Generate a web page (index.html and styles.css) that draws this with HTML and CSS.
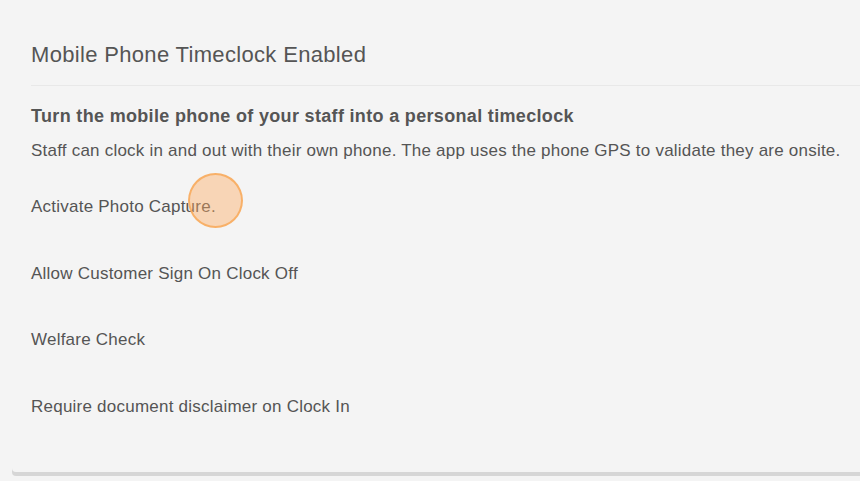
FILE: index.html
```html
<!DOCTYPE html>
<html lang="en">
<head>
    <meta charset="UTF-8">
    <title>Mobile Phone Timeclock</title>
    <link rel="stylesheet" href="styles.css">
</head>
<body>
<div class="card">
    <div class="card-head">
        <h2>Mobile Phone Timeclock Enabled</h2>
    </div>
    <div class="card-body">
        <h4>Turn the mobile phone of your staff into a personal timeclock</h4>
        <p class="desc">Staff can clock in and out with their own phone. The app uses the phone GPS to validate they are onsite.</p>
        <ul class="options">
            <li class="clicked">Activate Photo Capture.<span class="click-dot"></span></li>
            <li>Allow Customer Sign On Clock Off</li>
            <li>Welfare Check</li>
            <li>Require document disclaimer on Clock In</li>
        </ul>
    </div>
</div>
</body>
</html>
```

FILE: styles.css
```css
*{
    margin:0;
    padding:0;
    list-style:none;
    box-sizing:border-box;
}
html,body{
    background:#f4f4f4;
    height:100%;
    overflow:hidden;
}
body{
    font-family:"Liberation Sans", Arial, sans-serif;
    color:#555;
}
.card{
    margin-left:12px;
    height:472px;
    background:#f4f4f4;
    border-radius:0 0 0 4px;
    box-shadow:0 4px 0 #d6d6d6;
    padding:0 0 0 19px;
}
.card-head{
    padding-top:40px;
    height:86px;
    border-bottom:1px solid #e8e8e8;
}
.card-head h2{
    font-size:22px;
    font-weight:normal;
    line-height:30px;
    letter-spacing:0.33px;
}
.card-body{
    padding-top:18px;
}
.card-body h4{
    font-size:18px;
    font-weight:bold;
    line-height:24px;
    letter-spacing:0.33px;
}
.desc{
    font-size:17px;
    line-height:22px;
    margin-top:12px;
    letter-spacing:0.22px;
}
.options{
    margin-top:34px;
}
.options li{
    font-size:17px;
    line-height:22px;
    height:66.5px;
    letter-spacing:0.23px;
}
.options li.clicked{
    position:relative;
}
.click-dot{
    position:absolute;
    left:157px;
    top:-23px;
    width:55px;
    height:55px;
    border-radius:50%;
    background:rgba(253,170,95,0.42);
    border:2px solid rgba(248,170,90,0.85);
}
```
